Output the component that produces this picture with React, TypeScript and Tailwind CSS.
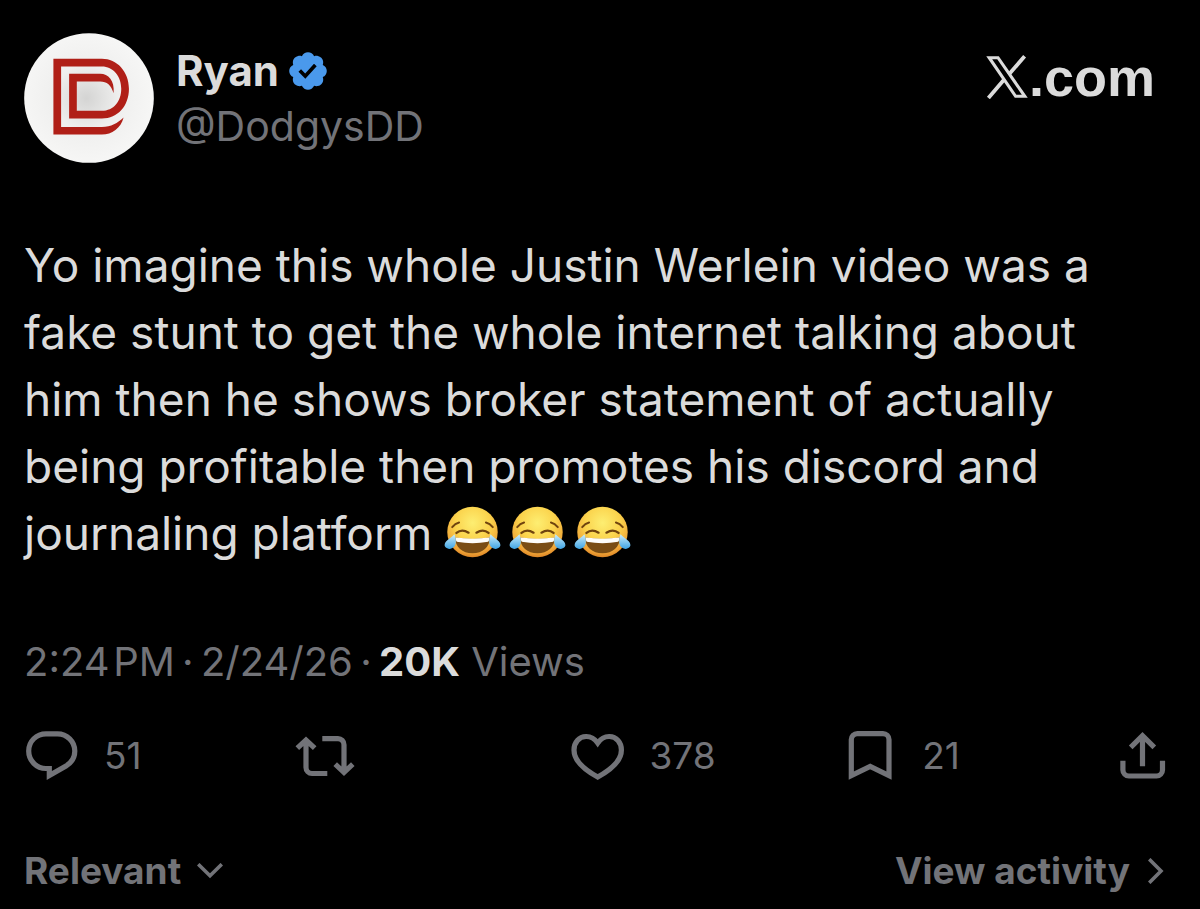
interface IIconProps {
  className?: string;
}

function Avatar({ className = '' }: IIconProps) {
  return (
    <svg viewBox="12 10 389 389" className={className} role="img" aria-label="Ryan">
      <defs>
        <radialGradient id="avatar-bg" cx="0.48" cy="0.5" r="0.5">
          <stop offset="0" stopColor="#d4d4d3" />
          <stop offset="0.5" stopColor="#efefee" />
          <stop offset="1" stopColor="#f6f6f5" />
        </radialGradient>
      </defs>
      <circle cx="206.5" cy="204.5" r="194" fill="url(#avatar-bg)" />
      <path
        fill="#b01f17"
        d="M100 87H245C290 87 326 125 326 177C326 228 293 266 245 266H147V132H240C264 132 284 152 280 190C273 166 260 155 240 155H170V243H245C280 243 303 215 303 177C303 139 279 110 245 110H123V291H245C273 291 292 280 310 263C302 295 275 314 245 314H100Z"
      />
    </svg>
  );
}

function VerifiedBadge({ className = '' }: IIconProps) {
  return (
    <svg viewBox="1.5 1.5 19 19" className={className} role="img" aria-label="Verified account">
      <path
        fill="#4a99ec"
        d="M20.396 11c-.018-.646-.215-1.275-.57-1.816-.354-.54-.852-.972-1.438-1.246.223-.607.27-1.264.14-1.897-.131-.634-.437-1.218-.882-1.687-.47-.445-1.053-.75-1.687-.882-.633-.13-1.29-.083-1.897.14-.273-.587-.704-1.086-1.245-1.44S11.647 1.62 11 1.604c-.646.017-1.273.213-1.813.568s-.969.854-1.24 1.44c-.608-.223-1.267-.272-1.902-.14-.635.13-1.22.436-1.69.882-.445.47-.749 1.055-.878 1.688-.13.633-.08 1.29.144 1.896-.587.274-1.087.705-1.443 1.245-.356.54-.555 1.17-.574 1.817.02.647.218 1.276.574 1.817.356.54.856.972 1.443 1.245-.224.606-.274 1.263-.144 1.896.13.634.433 1.218.877 1.688.47.443 1.054.747 1.687.878.633.132 1.29.084 1.897-.136.274.586.705 1.084 1.246 1.439.54.354 1.17.551 1.816.569.647-.016 1.276-.213 1.817-.567s.972-.854 1.245-1.44c.604.239 1.266.296 1.903.164.636-.132 1.22-.447 1.68-.907.46-.46.776-1.044.908-1.681s.075-1.299-.165-1.903c.586-.274 1.084-.705 1.439-1.246.354-.54.551-1.17.569-1.816zM9.662 14.85l-3.429-3.428 1.293-1.302 2.072 2.072 4.4-4.794 1.347 1.246z"
      />
    </svg>
  );
}

function XLogo({ className = '' }: IIconProps) {
  return (
    <svg viewBox="0 0 42 44" fill="none" stroke="currentColor" className={className} role="img" aria-label="X">
      <path strokeWidth="3.1" d="M3.2 2.7H12L38.8 41.3H29.6Z" />
      <path strokeWidth="3.8" d="M38.6 1.3L22.8 19.6M18.4 24.2L2.4 43" />
    </svg>
  );
}

function JoyEmoji() {
  return (
    <svg viewBox="8 14 174 162" className="h-[54px] w-[57px]" role="img" aria-label="Face with tears of joy">
      <defs>
        <radialGradient id="joy-face" cx="0.5" cy="0.32" r="0.7">
          <stop offset="0" stopColor="#fdee72" />
          <stop offset="0.5" stopColor="#fbd34c" />
          <stop offset="0.85" stopColor="#efa437" />
          <stop offset="1" stopColor="#d97f22" />
        </radialGradient>
        <linearGradient id="joy-tear" x1="0" y1="0" x2="0" y2="1">
          <stop offset="0" stopColor="#cdeefb" />
          <stop offset="1" stopColor="#3fa4e4" />
        </linearGradient>
      </defs>
      <circle cx="95" cy="95" r="77" fill="url(#joy-face)" />
      <g fill="none" stroke="#70440f" strokeLinecap="round">
        <path strokeWidth="6" d="M33 80Q42 69 54 66M136 66Q148 69 157 80" />
        <path strokeWidth="7" d="M46 98Q62 84 83 97M107 97Q128 84 144 98" />
      </g>
      <path fill="#7a4d14" d="M42 112Q95 120 148 112C148 142 126 160 95 160S42 142 42 112Z" />
      <path fill="#fdfdfb" d="M43 112Q95 119 147 112Q147 120 143 125Q95 134 47 125Q43 120 43 112Z" />
      <path fill="url(#joy-tear)" d="M40 102C44 114 46 126 42 135C37 148 20 150 12 141C5 131 16 121 26 114Q34 108 40 102Z" />
      <path fill="url(#joy-tear)" d="M150 102C146 114 144 126 148 135C153 148 170 150 178 141C185 131 174 121 164 114Q156 108 150 102Z" />
    </svg>
  );
}

interface IActionProps {
  label: string;
  count?: string;
  path: string;
}

const ACTIONS: IActionProps[] = [
  {
    label: 'Reply',
    count: '51',
    path: 'M24 5.8H35.5C45 5.8 52.8 13.5 52.8 23C52.8 29.5 49.3 34.8 44 38L27.3 47.6V40.5H24C14.5 40.5 6.7 32.5 6.7 23C6.7 13.3 14.5 5.8 24 5.8Z',
  },
  {
    label: 'Repost',
    path: 'M2.3 20.2L11 12L19.7 20.2M11 12V39.5A6 6 0 0 0 17 45.5H32.3M27.3 10.7H43A6 6 0 0 1 49 16.7V44.3M40.2 36.2L49 44.4L57.8 36.2',
  },
  {
    label: 'Like',
    count: '378',
    path: 'M29.7 15C26.5 10.5 22 8.4 18 8.5C11 8.7 6 14.5 6 22C6 32 15 41 29.7 49C44.4 41 53.4 32 53.4 22C53.4 14.5 48.4 8.7 41.4 8.5C37.4 8.4 32.9 10.5 29.7 15Z',
  },
  {
    label: 'Bookmark',
    count: '21',
    path: 'M11.3 47.7V11.6A6 6 0 0 1 17.3 5.6H43A6 6 0 0 1 49 11.6V47.7L30.2 38.5Z',
  },
  {
    label: 'Share',
    path: 'M29.5 38.3V8M17.7 19.3L29.5 7.6L41.3 19.3M9.9 32.7V42A6 6 0 0 0 15.9 48H43.5A6 6 0 0 0 49.5 42V32.7',
  },
];

function Action({ label, count, path }: IActionProps) {
  return (
    <button type="button" aria-label={label} className="flex items-center gap-[22px]">
      <svg viewBox="0 0 60 56" fill="none" stroke="currentColor" strokeWidth="5.2" className="h-14 w-[60px] shrink-0">
        <path d={path} />
      </svg>
      {count && <span className="text-[37px] leading-12">{count}</span>}
    </button>
  );
}

function App() {
  return (
    <main className="min-h-screen bg-black pt-[33px] pb-3 font-['Inter',sans-serif] text-[#dbdbdb]">
      <header className="flex items-start justify-between pr-[45px] pl-6">
        <div className="flex gap-[22px]">
          <Avatar className="size-[130px] shrink-0" />
          <div className="pt-[9px]">
            <h1 className="flex items-center gap-[10px] text-[42px] leading-[58px] font-bold">
              Ryan
              <VerifiedBadge className="size-[38px]" />
            </h1>
            <p className="text-[41px] leading-[52px] text-[#727378]">@DodgysDD</p>
          </div>
        </div>
        <a
          href="#"
          className="flex items-center gap-px pt-[14px] font-['Liberation_Sans',sans-serif] text-[54px] leading-[60px] font-bold"
        >
          <XLogo className="h-11 w-[42px]" />
          .com
        </a>
      </header>

      <p className="mt-[69px] px-6 text-[46px] leading-[67px]">
        Yo imagine this whole Justin Werlein video was a
        <br />
        fake stunt to get the whole internet talking about
        <br />
        him then he shows broker statement of actually
        <br />
        being profitable then promotes his discord and
        <br />
        journaling platform
        <span className="ml-3 inline-flex gap-2 pb-0.5 align-text-bottom">
          <JoyEmoji />
          <JoyEmoji />
          <JoyEmoji />
        </span>
      </p>

      <p className="mt-[71px] px-6 text-[40px] leading-12 text-[#727378]">
        2:24&#8202;PM&#8201;·&#8201;2/24/26&#8201;·&#8201;<strong className="font-bold text-[#dbdbdb]">20K</strong> Views
      </p>

      <div className="mt-[42px] grid grid-cols-[1fr_1fr_1fr_1fr_auto] pr-[27px] pl-[22px] text-[#727378]">
        {ACTIONS.map((action) => (
          <Action key={action.label} {...action} />
        ))}
      </div>

      <footer className="mt-[63px] flex items-center justify-between pr-9 pl-6 text-[37px] leading-12 font-bold text-[#727378]">
        <button type="button" className="flex items-center gap-4">
          Relevant
          <svg viewBox="0 0 26 16" fill="none" stroke="currentColor" strokeWidth="3.6" className="h-4 w-[26px]">
            <path d="M1.2 1.2L13 12.8L24.8 1.2" />
          </svg>
        </button>
        <a href="#" className="flex items-center gap-[18px]">
          View activity
          <svg viewBox="0 0 16 26" fill="none" stroke="currentColor" strokeWidth="3.6" className="h-[26px] w-4">
            <path d="M1.2 1.2L13 13L1.2 24.8" />
          </svg>
        </a>
      </footer>
    </main>
  );
}

export default App;
